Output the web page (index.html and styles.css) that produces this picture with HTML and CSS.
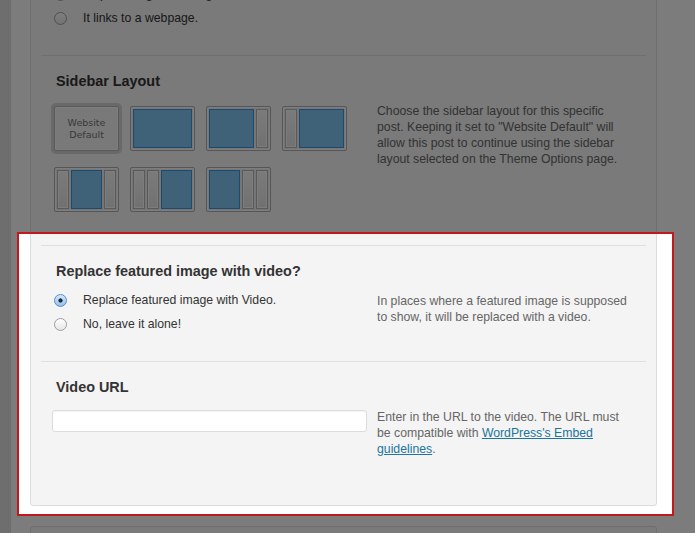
FILE: index.html
```html
<!DOCTYPE html>
<html lang="en">
<head>
<meta charset="utf-8">
<title>Post Options</title>
<link rel="stylesheet" href="styles.css">
</head>
<body>
<div class="admin">
  <div class="admin-edge"></div>
  <main class="content">
    <div class="metabox">
      <section class="opt opt-first">
        <h3 class="opt-title">Featured Image Link</h3>
        <div class="opt-row">
          <div class="opt-controls">
            <label class="radio"><span class="rb"></span>It doesn't link anywhere.</label>
            <label class="radio"><span class="rb"></span>It opens a lightbox image.</label>
            <label class="radio"><span class="rb"></span>It links to a webpage.</label>
          </div>
        </div>
      </section>

      <section class="opt">
        <h3 class="opt-title">Sidebar Layout</h3>
        <div class="opt-row">
          <div class="opt-controls">
            <div class="layouts">
              <div class="lay sel"><span class="lay-text">Website<br>Default</span></div>
              <div class="lay"><span class="mn"></span></div>
              <div class="lay"><span class="mn"></span><span class="sb"></span></div>
              <div class="lay"><span class="sb"></span><span class="mn"></span></div>
              <div class="lay"><span class="sb"></span><span class="mn"></span><span class="sb"></span></div>
              <div class="lay"><span class="sb"></span><span class="sb"></span><span class="mn"></span></div>
              <div class="lay"><span class="mn"></span><span class="sb"></span><span class="sb"></span></div>
            </div>
          </div>
          <p class="opt-desc">Choose the sidebar layout for this specific post. Keeping it set to "Website Default" will allow this post to continue using the sidebar layout selected on the Theme Options page.</p>
        </div>
      </section>

      <div class="tour-target">
        <section class="opt">
          <h3 class="opt-title">Replace featured image with video?</h3>
          <div class="opt-row">
            <div class="opt-controls">
              <label class="radio"><span class="rb on"></span>Replace featured image with Video.</label>
              <label class="radio"><span class="rb"></span>No, leave it alone!</label>
            </div>
            <p class="opt-desc">In places where a featured image is supposed to show, it will be replaced with a video.</p>
          </div>
        </section>

        <section class="opt">
          <h3 class="opt-title">Video URL</h3>
          <div class="opt-row">
            <div class="opt-controls">
              <input class="text-input" type="text" value="">
            </div>
            <p class="opt-desc">Enter in the URL to the video. The URL must be compatible with <a href="#">WordPress's Embed guidelines</a>.</p>
          </div>
        </section>
      </div>
    </div>

    <div class="metabox metabox-next"></div>
  </main>
</div>
</body>
</html>
```

FILE: styles.css
```css
html, body {
  margin: 0;
  padding: 0;
}

body {
  background: #f8f8f8;
  font-family: "Liberation Sans", Arial, sans-serif;
  font-size: 12.25px;
  color: #333;
  overflow: hidden;
  height: 533px;
}

.admin {
  display: flex;
  min-height: 533px;
}

.admin-edge {
  width: 11px;
  flex: none;
  background: #dcdcdc;
}

.content {
  flex: 1;
  padding: 0 38px 0 19px;
}

.metabox {
  margin-top: -86px;
  background: #f4f4f4;
  border: 1px solid #dcdcdc;
  border-radius: 3px;
  padding: 0 10px 23px;
}

.metabox-next {
  margin-top: 20px;
  height: 60px;
  padding: 0;
}

.opt {
  border-top: 1px solid #dfdfdf;
  padding: 16px 11px 25px;
}

.opt-first {
  border-top: 0;
  padding-top: 17px;
}

.opt-title {
  margin: 0;
  padding-left: 4px;
  font-size: 14.4px;
  line-height: 18px;
  font-weight: bold;
  color: #333;
}

.opt-row {
  display: flex;
  gap: 10px;
  margin-top: 8px;
}

.opt-controls {
  width: 315px;
  flex: none;
}

.opt-desc {
  width: 253px;
  margin: 0;
  padding-top: 5px;
  line-height: 16px;
  color: #666;
}

.opt-desc a {
  color: #21759b;
  text-decoration: underline;
}

/* radios */
.radio {
  display: flex;
  align-items: center;
  height: 24px;
  margin-left: 2px;
  color: #333;
}

.rb {
  width: 13px;
  height: 13px;
  box-sizing: border-box;
  border-radius: 50%;
  border: 1px solid #9d9d9d;
  background: linear-gradient(#ffffff, #e6e6e6);
  box-shadow: 0 1px 0 rgba(255, 255, 255, 0.6);
  margin-right: 16px;
  flex: none;
}

.rb.on {
  border-color: #5a8ccb;
  background:
    radial-gradient(circle, #1b2a40 0 1.8px, transparent 2.4px),
    linear-gradient(#d6e8fc, #94bfee);
}

/* sidebar layouts */
.layouts {
  display: grid;
  grid-template-columns: repeat(4, 65px);
  column-gap: 11px;
  row-gap: 16px;
  margin-left: 2px;
  padding: 8px 0 8px;
}

.lay {
  box-sizing: border-box;
  height: 45px;
  border: 1px solid #acacac;
  border-radius: 2px;
  background: #ececec;
  box-shadow: inset 0 0 0 1px #fafafa;
  padding: 2px;
  display: flex;
  gap: 2px;
}

.lay.sel {
  background: #f3f3f3;
  border-color: #b4b4b4;
  box-shadow: 0 0 0 3px #d2d2d2, inset 0 0 0 1px #fafafa;
  align-items: center;
  justify-content: center;
}

.lay-text {
  font-family: "DejaVu Sans", sans-serif;
  font-size: 9.5px;
  line-height: 12px;
  color: #737373;
  text-align: center;
}

.sb {
  width: 12px;
  flex: none;
  box-sizing: border-box;
  border: 1px solid #b2b2b2;
  background: linear-gradient(#f6f6f6, #e2e2e2);
  box-shadow: inset 0 0 0 1px #fbfbfb;
}

.mn {
  flex: 1;
  box-sizing: border-box;
  border: 1px solid #3a94e0;
  background: #7ec4f2;
}

/* text input */
.text-input {
  display: block;
  box-sizing: border-box;
  width: 315px;
  height: 22px;
  margin: 6px 0 0;
  border: 1px solid #dcdcdc;
  border-radius: 3px;
  background: #fff;
  box-shadow: inset 0 1px 1px rgba(0, 0, 0, 0.04);
  font: inherit;
  padding: 0 5px;
}

/* guided-tour spotlight */
.tour-target {
  position: relative;
}

.tour-target::before {
  content: "";
  position: absolute;
  top: -13px;
  left: -24px;
  right: -28px;
  bottom: -34px;
  background: #fff;
  z-index: -1;
}

.tour-target::after {
  content: "";
  position: absolute;
  top: -13px;
  left: -24px;
  right: -28px;
  bottom: -34px;
  border: 2px solid #c21a1c;
  box-shadow: 0 0 0 2000px rgba(0, 0, 0, 0.5);
  pointer-events: none;
  z-index: 5;
}
```
